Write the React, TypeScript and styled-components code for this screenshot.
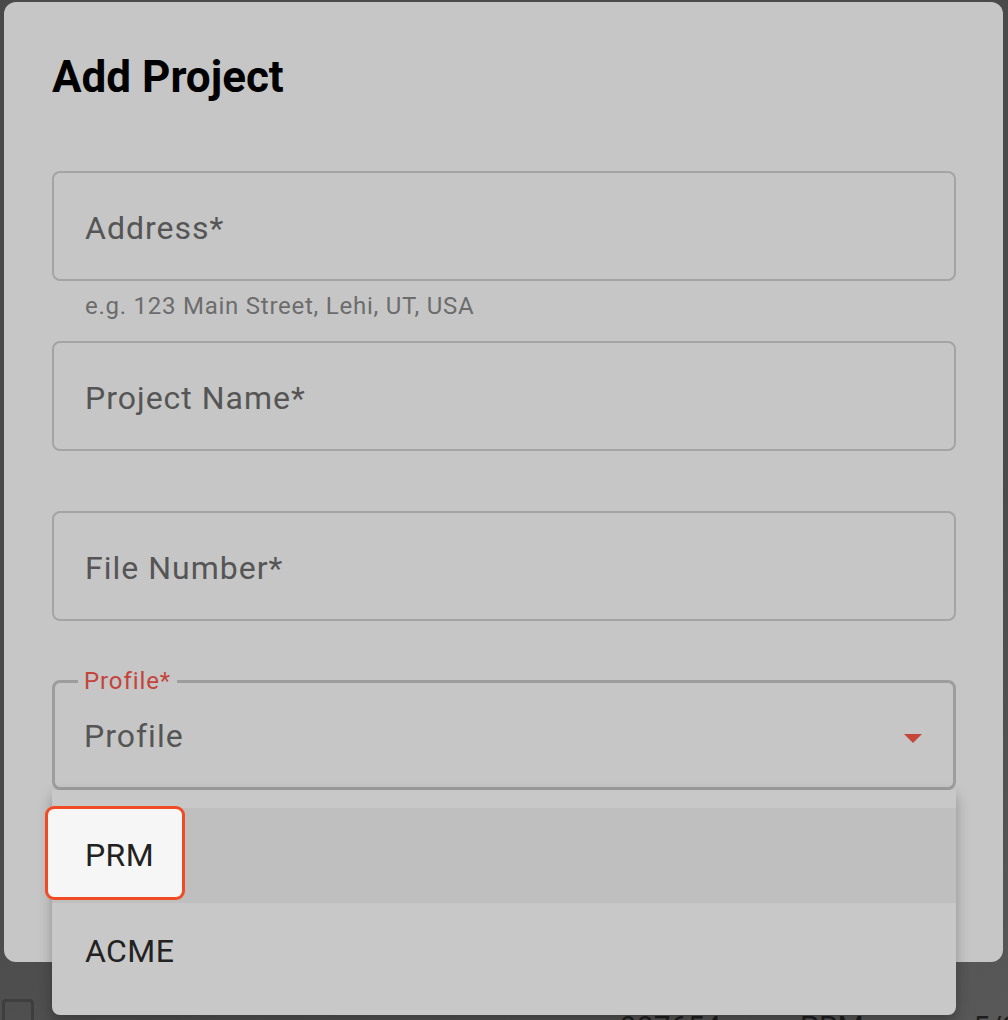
import styled, { createGlobalStyle } from "styled-components";

const Global = createGlobalStyle`
  body {
    margin: 0;
    font-family: Roboto, "Liberation Sans", sans-serif;
    background: #4a4a4a;
  }
`;

const Page = styled.div`
  position: relative;
  width: 1008px;
  height: 1020px;
  overflow: hidden;
  background: linear-gradient(160deg, #4a4a4a 60%, #585858 100%);
  padding: 2px 5px 0 4px;
  box-sizing: border-box;
`;

const Dialog = styled.div`
  position: relative;
  height: 960px;
  background: #c6c6c6;
  border-radius: 12px;
  padding: 47px 47px 0 48px;
  box-sizing: border-box;
`;

const Title = styled.h1`
  margin: 0 0 66px;
  font-size: 44px;
  line-height: 56px;
  font-weight: 700;
  color: #000;
`;

const Group = styled.div`
  position: relative;
  height: 170px;
`;

const Field = styled.fieldset<{ $focused?: boolean }>`
  margin: 0;
  box-sizing: border-box;
  border: ${(p) => (p.$focused ? "3px solid #9d9d9d" : "2px solid #a4a4a4")};
  border-radius: 8px;
  padding: ${(p) => (p.$focused ? "0 32px 9px 29px" : "3px 32px 0 31px")};
  display: flex;
  align-items: center;
  justify-content: space-between;
  position: relative;
  top: ${(p) => (p.$focused ? "-12px" : "0")};
  height: ${(p) => (p.$focused ? "121px" : "110px")};
`;

const Legend = styled.legend`
  padding: 0 6px;
  margin-left: -6px;
  font-size: 24px;
  line-height: 24px;
  color: #c4433a;
  letter-spacing: 0.9px;
`;

const Label = styled.span`
  font-size: 32px;
  color: #555;
  letter-spacing: 1px;
`;

const Helper = styled.div`
  margin: 11px 0 0 33px;
  font-size: 24px;
  color: #6c6c6c;
  letter-spacing: 0.75px;
`;

const Arrow = styled.span`
  width: 0;
  height: 0;
  border-left: 9px solid transparent;
  border-right: 9px solid transparent;
  border-top: 9px solid #c6463b;
  margin-right: -1px;
  margin-top: 5px;
`;

const Menu = styled.div`
  position: absolute;
  top: 109px;
  left: 0;
  right: 0;
  height: 225px;
  background: #c8c8c8;
  border-radius: 0 0 8px 8px;
  padding-top: 18px;
  box-sizing: border-box;
  box-shadow: 0 6px 14px rgba(0, 0, 0, 0.28);
  z-index: 2;
`;

const Item = styled.div<{ $selected?: boolean }>`
  position: relative;
  height: 95px;
  display: flex;
  align-items: center;
  padding-left: 33px;
  font-size: 32px;
  color: #222;
  letter-spacing: 0.4px;
  background: ${(p) => (p.$selected ? "#bfbfbf" : "transparent")};
`;

const Chip = styled.span`
  position: absolute;
  left: -7px;
  top: -2px;
  width: 140px;
  height: 94px;
  box-sizing: border-box;
  background: #f6f6f6;
  border: 3px solid #f04b25;
  border-radius: 9px;
  display: flex;
  align-items: center;
  padding: 4px 0 0 37px;
`;

const BackRow = styled.div`
  display: grid;
  grid-template-columns: 40px 576px 180px 173px auto;
  align-items: start;
  height: 58px;
  padding-top: 37px;
  box-sizing: border-box;
  color: #1e1e1e;
  font-size: 30px;
`;

const Check = styled.span`
  width: 32px;
  height: 30px;
  border: 3px solid #3e3e3e;
  border-radius: 4px;
  margin-left: -2px;
  box-sizing: border-box;
`;

const Cell = styled.span`
  padding-top: 10px;
`;

function App() {
  return (
    <>
      <Global />
      <Page>
        <Dialog>
          <Title>Add Project</Title>
          <Group>
            <Field>
              <Label>Address*</Label>
            </Field>
            <Helper>e.g. 123 Main Street, Lehi, UT, USA</Helper>
          </Group>
          <Group>
            <Field>
              <Label>Project Name*</Label>
            </Field>
          </Group>
          <Group>
            <Field>
              <Label>File Number*</Label>
            </Field>
          </Group>
          <Group>
            <Field $focused>
              <Legend>Profile*</Legend>
              <Label>Profile</Label>
              <Arrow />
            </Field>
            <Menu>
              <Item $selected>
                <Chip>PRM</Chip>
              </Item>
              <Item>ACME</Item>
            </Menu>
          </Group>
        </Dialog>
        <BackRow>
          <Check />
          <span />
          <Cell>987654</Cell>
          <Cell>PRM</Cell>
          <Cell>5/9</Cell>
        </BackRow>
      </Page>
    </>
  );
}

export default App;
